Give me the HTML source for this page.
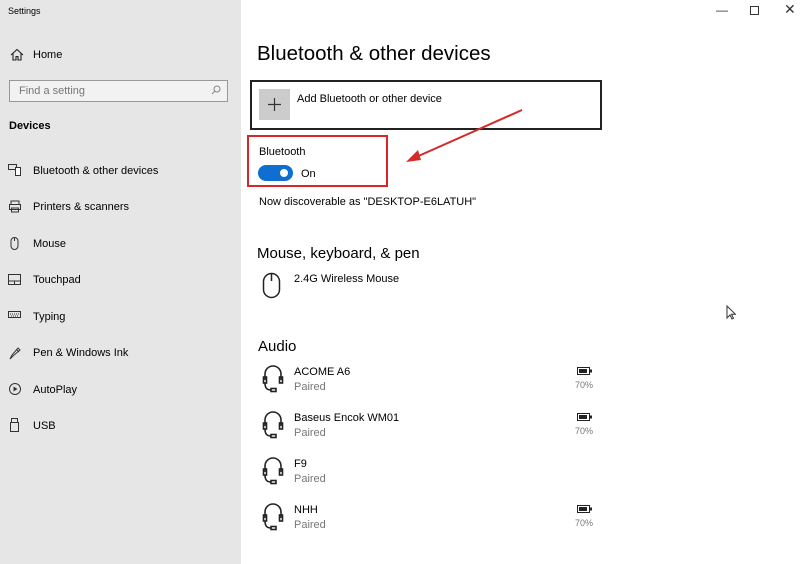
<!DOCTYPE html>
<html><head><meta charset="utf-8"><style>
*{margin:0;padding:0;box-sizing:border-box}
body{width:800px;height:564px;overflow:hidden;font-family:"Liberation Sans",sans-serif;color:#000;background:#fff;position:relative}
.side{position:absolute;left:0;top:0;width:241px;height:564px;background:#e6e6e6}
.a{position:absolute;white-space:nowrap}
.nav{font-size:11px;left:33px}
.ic{position:absolute;left:8px}
.h{font-size:11px}
.g{color:#777;font-size:11px}
</style></head><body>
<div class="side">
<div class="a" style="left:8px;top:6px;font-size:9px">Settings</div>
<svg class="a" style="left:10px;top:48px" width="14" height="13" viewBox="0 0 14 13"><path d="M1 7L7 1.5 13 7M3 5.5V12H6V8.5H8V12H11V5.5" fill="none" stroke="#222" stroke-width="1.1"/></svg>
<div class="a" style="left:33px;top:49px;font-size:11px">Home</div>
<div class="a" style="left:9px;top:80px;width:219px;height:22px;border:1.5px solid #999;background:#f2f2f2"></div>
<div class="a" style="left:19px;top:85px;font-size:11px;color:#777">Find a setting</div>
<svg class="a" style="left:211px;top:85px" width="10" height="10" viewBox="0 0 10 10"><circle cx="6" cy="4" r="3" fill="none" stroke="#888"/><path d="M4 6L1 9" stroke="#888"/></svg>
<div class="a" style="left:9px;top:120px;font-size:11px;font-weight:bold">Devices</div>
<svg class="ic a" style="top:164px" width="14" height="12"><rect x="0.5" y="0.5" width="8" height="5" fill="none" stroke="#333"/><rect x="7.5" y="3.5" width="5" height="8" fill="#fff" stroke="#333"/></svg>
<div class="a nav" style="top:165px">Bluetooth &amp; other devices</div>
<svg class="ic a" style="top:200px" width="14" height="13"><path d="M3 4V1h8v3M1.5 4.5h11v5h-11zM3.5 8h7v4h-7z" fill="none" stroke="#333"/></svg>
<div class="a nav" style="top:201px">Printers &amp; scanners</div>
<svg class="ic a" style="top:237px" width="14" height="13"><rect x="3" y="0.5" width="7" height="12" rx="3.5" fill="none" stroke="#333"/><path d="M6.5 1v3" stroke="#333"/></svg>
<div class="a nav" style="top:238px">Mouse</div>
<svg class="ic a" style="top:274px" width="14" height="12"><rect x="0.5" y="0.5" width="12" height="10" fill="none" stroke="#333"/><path d="M0.5 7h12M6.5 7v4" stroke="#333"/></svg>
<div class="a nav" style="top:274px">Touchpad</div>
<svg class="ic a" style="top:311px" width="14" height="9"><rect x="0.5" y="0.5" width="12" height="6" fill="none" stroke="#333"/><path d="M2 3h9M3 5h7" stroke="#333" stroke-dasharray="1 1"/></svg>
<div class="a nav" style="top:311px">Typing</div>
<svg class="ic a" style="top:346px" width="14" height="14"><path d="M2 13l2-4 6-7 2 2-7 6zM9 4l2 2" fill="none" stroke="#333"/></svg>
<div class="a nav" style="top:347px">Pen &amp; Windows Ink</div>
<svg class="ic a" style="top:382px" width="14" height="14"><circle cx="7" cy="7" r="5.5" fill="none" stroke="#333"/><path d="M5.5 4.5v5l4-2.5z" fill="#333"/></svg>
<div class="a nav" style="top:384px">AutoPlay</div>
<svg class="ic a" style="top:418px" width="14" height="14"><rect x="3.5" y="0.5" width="6" height="4" fill="none" stroke="#333"/><rect x="2.5" y="4.5" width="8" height="9" fill="none" stroke="#333"/></svg>
<div class="a nav" style="top:420px">USB</div>
</div>

<div class="a" style="left:716px;top:3px;font-size:12px;color:#333">&#8212;</div>
<div class="a" style="left:750px;top:6px;width:9px;height:9px;border:1px solid #333"></div>
<div class="a" style="left:784px;top:1px;font-size:14px;color:#333">✕</div>

<div class="a" style="left:257px;top:42px;font-size:20.5px">Bluetooth &amp; other devices</div>
<div class="a" style="left:250px;top:80px;width:352px;height:50px;border:2px solid #222"></div>
<div class="a" style="left:259px;top:89px;width:31px;height:31px;background:#ccc"></div>
<svg class="a" style="left:259px;top:89px" width="31" height="31"><path d="M15.5 9v13M9 15.5h13" stroke="#333" stroke-width="1.2"/></svg>
<div class="a h" style="left:297px;top:93px">Add Bluetooth or other device</div>
<div class="a" style="left:247px;top:135px;width:141px;height:52px;border:2px solid #d9242a"></div>
<div class="a h" style="left:259px;top:146px">Bluetooth</div>
<div class="a" style="left:258px;top:165px;width:35px;height:16px;border-radius:8px;background:#0e6fd0"></div>
<div class="a" style="left:280px;top:169px;width:8px;height:8px;border-radius:4px;background:#fff"></div>
<div class="a h" style="left:301px;top:168px">On</div>
<div class="a h" style="left:259px;top:196px">Now discoverable as "DESKTOP-E6LATUH"</div>
<svg class="a" style="left:400px;top:105px" width="130" height="62"><path d="M122 5L14 53" stroke="#d42a2a" stroke-width="2"/><path d="M6 57L18 45 21 55z" fill="#d42a2a"/></svg>

<div class="a" style="left:257px;top:245px;font-size:15px">Mouse, keyboard, &amp; pen</div>
<svg class="a" style="left:262px;top:272px" width="20" height="27"><rect x="1.5" y="1.5" width="16" height="24" rx="8" fill="none" stroke="#222" stroke-width="1.5"/><path d="M9.5 2v7" stroke="#222" stroke-width="1.5"/></svg>
<div class="a h" style="left:294px;top:273px">2.4G Wireless Mouse</div>
<svg class="a" style="left:722px;top:305px" width="14" height="16"><path d="M5 1v12l3-3 2 4 1.5-.7-2-4h4z" fill="#fff" stroke="#333"/></svg>

<div class="a" style="left:258px;top:338px;font-size:15px">Audio</div>

<div class="a h" style="left:294px;top:366px">ACOME A6</div><div class="a g" style="left:294px;top:381px">Paired</div>
<div class="a h" style="left:294px;top:412px">Baseus Encok WM01</div><div class="a g" style="left:294px;top:427px">Paired</div>
<div class="a h" style="left:294px;top:458px">F9</div><div class="a g" style="left:294px;top:473px">Paired</div>
<div class="a h" style="left:294px;top:504px">NHH</div><div class="a g" style="left:294px;top:519px">Paired</div>

<svg class="a" style="left:262px;top:364px" width="22" height="30"><g fill="none" stroke="#222" stroke-width="1.6"><path d="M3 16V10a8 8 0 0 1 16 0v6"/><rect x="1.5" y="13" width="3" height="6"/><rect x="17.5" y="13" width="3" height="6"/><path d="M3 19c0 5 2 7 6 7"/><rect x="9" y="24.5" width="5" height="3"/></g></svg>
<svg class="a" style="left:262px;top:410px" width="22" height="30"><g fill="none" stroke="#222" stroke-width="1.6"><path d="M3 16V10a8 8 0 0 1 16 0v6"/><rect x="1.5" y="13" width="3" height="6"/><rect x="17.5" y="13" width="3" height="6"/><path d="M3 19c0 5 2 7 6 7"/><rect x="9" y="24.5" width="5" height="3"/></g></svg>
<svg class="a" style="left:262px;top:456px" width="22" height="30"><g fill="none" stroke="#222" stroke-width="1.6"><path d="M3 16V10a8 8 0 0 1 16 0v6"/><rect x="1.5" y="13" width="3" height="6"/><rect x="17.5" y="13" width="3" height="6"/><path d="M3 19c0 5 2 7 6 7"/><rect x="9" y="24.5" width="5" height="3"/></g></svg>
<svg class="a" style="left:262px;top:502px" width="22" height="30"><g fill="none" stroke="#222" stroke-width="1.6"><path d="M3 16V10a8 8 0 0 1 16 0v6"/><rect x="1.5" y="13" width="3" height="6"/><rect x="17.5" y="13" width="3" height="6"/><path d="M3 19c0 5 2 7 6 7"/><rect x="9" y="24.5" width="5" height="3"/></g></svg>

<svg class="a" style="left:577px;top:367px" width="16" height="9"><rect x="0.5" y="0.5" width="12" height="7" fill="none" stroke="#222"/><rect x="2" y="2" width="8" height="4" fill="#222"/><rect x="13" y="2.5" width="2" height="3" fill="#222"/></svg>
<div class="a g" style="left:575px;top:380px;font-size:9px">70%</div>
<svg class="a" style="left:577px;top:413px" width="16" height="9"><rect x="0.5" y="0.5" width="12" height="7" fill="none" stroke="#222"/><rect x="2" y="2" width="8" height="4" fill="#222"/><rect x="13" y="2.5" width="2" height="3" fill="#222"/></svg>
<div class="a g" style="left:575px;top:426px;font-size:9px">70%</div>
<svg class="a" style="left:577px;top:505px" width="16" height="9"><rect x="0.5" y="0.5" width="12" height="7" fill="none" stroke="#222"/><rect x="2" y="2" width="8" height="4" fill="#222"/><rect x="13" y="2.5" width="2" height="3" fill="#222"/></svg>
<div class="a g" style="left:575px;top:518px;font-size:9px">70%</div>
</body></html>
